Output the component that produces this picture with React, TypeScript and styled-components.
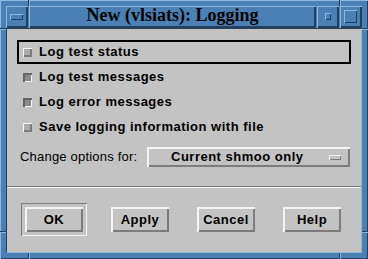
import React from 'react';
import styled, { createGlobalStyle, css } from 'styled-components';

const BG = '#c3c3c3';
const LIGHT = '#f4f4f4';
const DARK = '#7c7c7c';
const BLUE = '#4a80b4';
const BLUE_LIGHT = '#8cb8e0';
const BLUE_DARK = '#21405e';

const GlobalStyle = createGlobalStyle`
  html, body { margin: 0; padding: 0; background: ${BG}; }
  body { width: 368px; height: 259px; overflow: hidden; }
`;

const Frame = styled.div`
  position: relative;
  box-sizing: border-box;
  width: 368px;
  height: 259px;
  padding: 6px;
  background: ${BLUE};
  box-shadow: inset 1px 1px 0 ${BLUE_LIGHT}, inset -1px -1px 0 ${BLUE_DARK};
  display: flex;
  flex-direction: column;
`;

const Notch = styled.span<{ $vertical?: boolean; $left?: number; $right?: number; $top?: number; $bottom?: number }>`
  position: absolute;
  ${(p) =>
    p.$vertical
      ? css`
          width: 2px;
          height: 6px;
          background: linear-gradient(to right, ${BLUE_DARK} 50%, ${BLUE_LIGHT} 50%);
        `
      : css`
          width: 6px;
          height: 2px;
          background: linear-gradient(to bottom, ${BLUE_DARK} 50%, ${BLUE_LIGHT} 50%);
        `}
  ${(p) => (p.$left !== undefined ? `left: ${p.$left}px;` : '')}
  ${(p) => (p.$right !== undefined ? `right: ${p.$right}px;` : '')}
  ${(p) => (p.$top !== undefined ? `top: ${p.$top}px;` : '')}
  ${(p) => (p.$bottom !== undefined ? `bottom: ${p.$bottom}px;` : '')}
`;

const TitleRow = styled.div`
  display: flex;
  gap: 1px;
  height: 22px;
  flex: none;
`;

const WmButton = styled.div`
  width: 22px;
  height: 22px;
  flex: none;
  box-sizing: border-box;
  display: flex;
  align-items: center;
  justify-content: center;
  background: ${BLUE};
  box-shadow: inset 1px 1px 0 ${BLUE_LIGHT}, inset -2px -2px 0 ${BLUE_DARK};
`;

const WmGlyph = styled.span<{ $w: number; $h: number }>`
  display: block;
  width: ${(p) => p.$w}px;
  height: ${(p) => p.$h}px;
  box-sizing: border-box;
  background: ${BLUE};
  box-shadow: inset 1px 1px 0 ${BLUE_LIGHT}, inset -1px -1px 0 ${BLUE_DARK};
  margin: -1px 0 0 -1px;
`;

const Title = styled.div`
  flex: 1;
  height: 22px;
  box-sizing: border-box;
  padding-top: 1px;
  background: ${BLUE};
  box-shadow: inset 1px 1px 0 ${BLUE_LIGHT}, inset -2px -2px 0 ${BLUE_DARK};
  font-family: 'Liberation Serif', 'Times New Roman', serif;
  font-weight: bold;
  font-size: 18px;
  line-height: 16px;
  color: #000;
  text-align: center;
  white-space: nowrap;
`;

const Client = styled.div`
  flex: 1;
  box-sizing: border-box;
  background: ${BG};
  border-top: 1px solid ${BLUE_DARK};
  border-left: 1px solid ${BLUE_DARK};
  border-bottom: 1px solid ${BLUE_LIGHT};
  border-right: 1px solid ${BLUE_LIGHT};
  display: flex;
  flex-direction: column;
  font-family: 'Liberation Sans', Arial, sans-serif;
  color: #000;
`;

const ToggleList = styled.div`
  display: flex;
  flex-direction: column;
  gap: 1px;
  padding: 11px 10px 0 10px;
`;

const ToggleRow = styled.div<{ $focused?: boolean }>`
  height: 24px;
  box-sizing: border-box;
  border: 2px solid ${(p) => (p.$focused ? '#000' : 'transparent')};
  display: flex;
  align-items: center;
  gap: 7px;
  padding-left: 4px;
`;

const Check = styled.span<{ $checked?: boolean }>`
  display: block;
  width: 9px;
  height: 9px;
  flex: none;
  box-sizing: border-box;
  ${(p) =>
    p.$checked
      ? css`
          background: #8a8a8a;
          box-shadow: inset 2px 2px 0 #666, inset -1px -1px 0 ${LIGHT};
        `
      : css`
          background: #ababab;
          box-shadow: inset 1px 1px 0 ${LIGHT}, inset -2px -2px 0 ${DARK};
        `}
`;

const BoldLabel = styled.span`
  font-weight: bold;
  font-size: 13px;
  letter-spacing: 0.5px;
  line-height: 20px;
  white-space: nowrap;
`;

const OptionRow = styled.div`
  margin-top: 8px;
  height: 20px;
  display: flex;
  align-items: center;
  padding: 0 11px 0 13px;
`;

const PlainLabel = styled.span`
  font-size: 13px;
  letter-spacing: 0.2px;
  line-height: 20px;
  white-space: nowrap;
`;

const OptionButton = styled.div`
  margin-left: auto;
  width: 203px;
  height: 20px;
  box-sizing: border-box;
  display: flex;
  align-items: center;
  padding: 0 9px 0 24px;
  box-shadow: inset 2px 2px 0 ${LIGHT}, inset -2px -2px 0 ${DARK};
`;

const CascadeBar = styled.span`
  margin-left: auto;
  width: 12px;
  height: 5px;
  box-sizing: border-box;
  box-shadow: inset 1px 1px 0 ${LIGHT}, inset -1px -1px 0 ${DARK};
`;

const Separator = styled.div`
  margin-top: 19px;
  height: 2px;
  box-sizing: border-box;
  border-top: 1px solid ${DARK};
  border-bottom: 1px solid ${LIGHT};
`;

const ButtonRow = styled.div`
  display: flex;
  gap: 20px;
  padding: 15px 15px 16px 14px;
`;

const Slot = styled.div<{ $default?: boolean }>`
  width: 66px;
  height: 33px;
  box-sizing: border-box;
  padding: 4px;
  ${(p) =>
    p.$default &&
    css`
      box-shadow: inset 1px 1px 0 ${DARK}, inset -1px -1px 0 ${LIGHT};
    `}
`;

const PushButton = styled.div`
  width: 58px;
  height: 25px;
  box-sizing: border-box;
  display: flex;
  align-items: center;
  justify-content: center;
  box-shadow: inset 2px 2px 0 ${LIGHT}, inset -2px -2px 0 ${DARK};
  font-weight: bold;
  font-size: 13px;
  letter-spacing: 0.5px;
`;

const toggles = [
  { label: 'Log test status', checked: false, focused: true },
  { label: 'Log test messages', checked: true },
  { label: 'Log error messages', checked: true },
  { label: 'Save logging information with file', checked: false },
];

const buttons = ['OK', 'Apply', 'Cancel', 'Help'];

export default function App() {
  return (
    <>
      <GlobalStyle />
      <Frame>
        <Notch $vertical $left={28} $top={0} />
        <Notch $vertical $left={339} $top={0} />
        <Notch $vertical $left={28} $bottom={0} />
        <Notch $vertical $left={339} $bottom={0} />
        <Notch $left={0} $top={28} />
        <Notch $right={0} $top={28} />
        <Notch $left={0} $top={231} />
        <Notch $right={0} $top={231} />
        <TitleRow>
          <WmButton>
            <WmGlyph $w={13} $h={6} />
          </WmButton>
          <Title>New (vlsiats): Logging</Title>
          <WmButton>
            <WmGlyph $w={6} $h={7} />
          </WmButton>
          <WmButton>
            <WmGlyph $w={13} $h={13} />
          </WmButton>
        </TitleRow>
        <Client>
          <ToggleList>
            {toggles.map((t) => (
              <ToggleRow key={t.label} $focused={t.focused}>
                <Check $checked={t.checked} />
                <BoldLabel>{t.label}</BoldLabel>
              </ToggleRow>
            ))}
          </ToggleList>
          <OptionRow>
            <PlainLabel>Change options for:</PlainLabel>
            <OptionButton>
              <BoldLabel>Current shmoo only</BoldLabel>
              <CascadeBar />
            </OptionButton>
          </OptionRow>
          <Separator />
          <ButtonRow>
            {buttons.map((b, i) => (
              <Slot key={b} $default={i === 0}>
                <PushButton>{b}</PushButton>
              </Slot>
            ))}
          </ButtonRow>
        </Client>
      </Frame>
    </>
  );
}
